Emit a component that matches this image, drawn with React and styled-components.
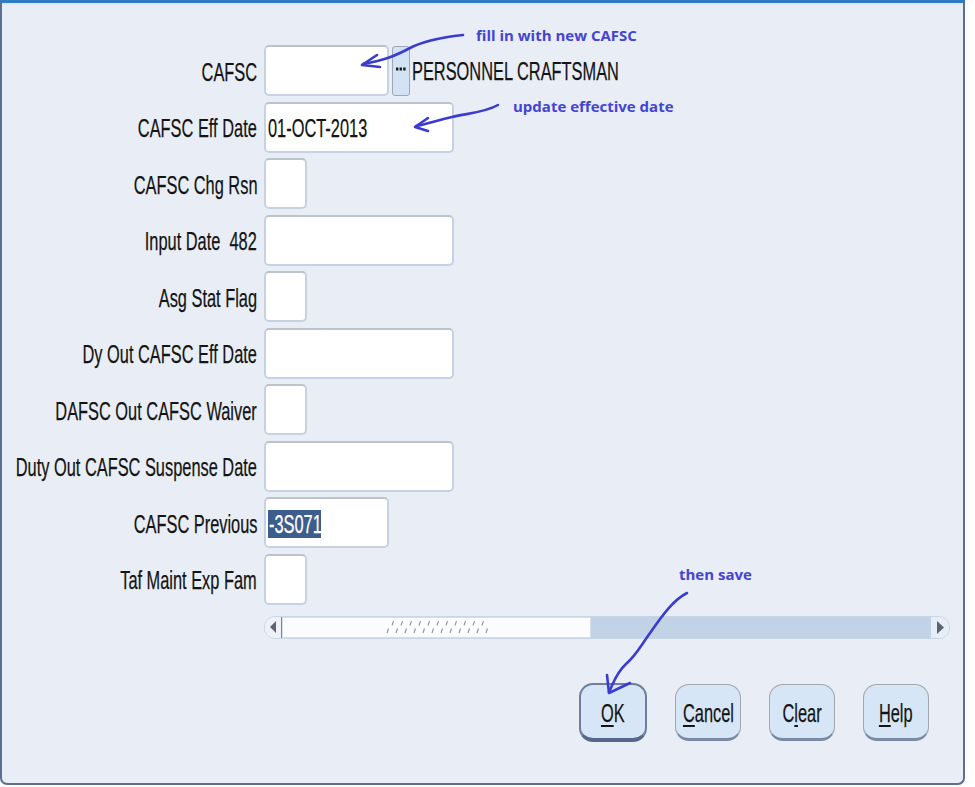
import React from 'react';
import styled, { createGlobalStyle } from 'styled-components';

const GlobalStyle = createGlobalStyle`
  html, body {
    margin: 0;
    padding: 0;
    background: #ffffff;
  }
  body {
    font-family: "Liberation Sans", Arial, sans-serif;
  }
`;

const Page = styled.div`
  position: relative;
  width: 975px;
  height: 787px;
  overflow: hidden;
`;

const Window = styled.div`
  box-sizing: border-box;
  width: 965px;
  height: 785px;
  background: #e9eef6;
  border: 2px solid #5b6e94;
  border-top: 3px solid #2f7cc5;
  border-radius: 0 0 7px 7px;
  box-shadow: inset 0 2px 0 #dfe7f1;
`;

const Form = styled.div`
  display: grid;
  grid-template-columns: 255px auto;
  column-gap: 7px;
  row-gap: 5.5px;
  padding-top: 42px;
  justify-content: start;
`;

const Label = styled.div`
  height: 51px;
  display: flex;
  align-items: center;
  justify-content: flex-end;
  padding-top: 2px;
  box-sizing: border-box;
`;

const Narrow = styled.span`
  display: inline-block;
  font-size: 26px;
  line-height: 1;
  color: #141414;
  white-space: pre;
  -webkit-text-stroke: 0.25px currentColor;
  transform: scaleX(0.63);
  transform-origin: ${p => (p.$from === 'left' ? 'left center' : p.$from === 'center' ? 'center' : 'right center')};
`;

const FieldCell = styled.div`
  display: flex;
  align-items: center;
  height: 51px;
`;

const fieldWidths = { s: 43, m: 125, l: 190 };

const Field = styled.div`
  box-sizing: border-box;
  width: ${p => fieldWidths[p.$size]}px;
  height: 51px;
  background: #ffffff;
  border: 2px solid #c6d2e2;
  border-top-color: #bcc3cd;
  border-radius: 5px;
  display: flex;
  align-items: center;
  padding-left: 2px;
  padding-top: 2px;
`;

const Selected = styled.span`
  display: inline-flex;
  align-items: center;
  width: 52px;
  height: 28px;
  padding-left: 1px;
  background: #3d5d8c;
  overflow: visible;
`;

const LovButton = styled.div`
  box-sizing: border-box;
  width: 18px;
  height: 50px;
  margin-left: 3px;
  background: #d3e2f4;
  border: 1.5px solid #9ea7b3;
  border-radius: 3px;
  display: flex;
  align-items: center;
  justify-content: center;
  padding-bottom: 4px;
`;

const Description = styled.span`
  margin-left: 2px;
`;

const Scrollbar = styled.div`
  box-sizing: border-box;
  display: flex;
  align-items: stretch;
  width: 686px;
  height: 23px;
  margin: 11px 0 0 262px;
  border: 1.5px solid #c9d5e5;
  border-radius: 11px;
  background: #eef2f8;
  overflow: hidden;
`;

const ScrollArrow = styled.div`
  width: ${p => p.$w}px;
  display: flex;
  align-items: center;
  justify-content: center;
  background: ${p => p.$bg};
  border-right: ${p => (p.$divider ? '1.5px solid #7d8592' : 'none')};
`;

const Thumb = styled.div`
  width: 307px;
  background: #fbfcfe;
  border: 1px solid #d7dfea;
  display: flex;
  align-items: center;
  justify-content: center;
`;

const Track = styled.div`
  flex: 1;
  background: #c2d3e8;
`;

const ButtonRow = styled.div`
  display: flex;
  justify-content: flex-end;
  align-items: flex-start;
  gap: 28px;
  margin-top: 44px;
  padding-right: 34px;
`;

const Button = styled.div`
  box-sizing: border-box;
  width: ${p => (p.$default ? 68 : 66)}px;
  height: ${p => (p.$default ? 59 : 57)}px;
  margin-top: ${p => (p.$default ? 0 : 1)}px;
  background: #d7e6f6;
  border: ${p => (p.$default ? '2px solid #6f7f9b' : '1.5px solid #a3a6ab')};
  border-bottom: ${p => (p.$default ? '4px solid #55688c' : '3px solid #7b8aa4')};
  border-radius: 14px;
  display: flex;
  align-items: center;
  justify-content: center;
  padding-top: 3px;
`;

const Key = styled.span`
  text-decoration: underline;
  text-underline-offset: 3px;
  text-decoration-thickness: 1.5px;
`;

const Overlay = styled.svg`
  position: absolute;
  left: 0;
  top: 0;
  pointer-events: none;
`;

const Note = styled.span`
  position: absolute;
  left: ${p => p.$x}px;
  top: ${p => p.$y}px;
  font-family: "Open Sans", "Noto Sans", sans-serif;
  font-weight: 700;
  font-size: 15px;
  line-height: 18px;
  color: #4444d2;
  white-space: nowrap;
`;

const rows = [
  { label: 'CAFSC', size: 'm', lov: true, desc: 'PERSONNEL CRAFTSMAN' },
  { label: 'CAFSC Eff Date', size: 'l', value: '01-OCT-2013' },
  { label: 'CAFSC Chg Rsn', size: 's' },
  { label: 'Input Date  482', size: 'l' },
  { label: 'Asg Stat Flag', size: 's' },
  { label: 'Dy Out CAFSC Eff Date', size: 'l' },
  { label: 'DAFSC Out CAFSC Waiver', size: 's' },
  { label: 'Duty Out CAFSC Suspense Date', size: 'l' },
  { label: 'CAFSC Previous', size: 'm', selected: '-3S071' },
  { label: 'Taf Maint Exp Fam', size: 's' },
];

const Dots = () => (
  <svg width="10" height="4" viewBox="0 0 10 4">
    <rect x="0" y="0.5" width="2.4" height="3" fill="#1a1a1a" />
    <rect x="3.6" y="0.5" width="2.4" height="3" fill="#1a1a1a" />
    <rect x="7.2" y="0.5" width="2.4" height="3" fill="#1a1a1a" />
  </svg>
);

const Grip = () => (
  <svg width="104" height="14" viewBox="0 0 104 14">
    {Array.from({ length: 11 }).map((_, i) => (
      <line key={`a${i}`} x1={7 + i * 9} y1="5.5" x2={8.5 + i * 9} y2="1" stroke="#8b93a0" strokeWidth="1.1" />
    ))}
    {Array.from({ length: 12 }).map((_, i) => (
      <line key={`b${i}`} x1={2 + i * 9} y1="13" x2={3.5 + i * 9} y2="8.5" stroke="#8b93a0" strokeWidth="1.1" />
    ))}
  </svg>
);

const LeftTri = () => (
  <svg width="6" height="12" viewBox="0 0 6 12">
    <path d="M6 0 L0 6 L6 12 Z" fill="#5d6470" />
  </svg>
);

const RightTri = () => (
  <svg width="7" height="13" viewBox="0 0 7 13">
    <path d="M0 0 L7 6.5 L0 13 Z" fill="#5d6470" />
  </svg>
);

export default function App() {
  return (
    <Page>
      <GlobalStyle />
      <Window>
        <Form>
          {rows.map(r => (
            <React.Fragment key={r.label}>
              <Label>
                <Narrow>{r.label}</Narrow>
              </Label>
              <FieldCell>
                <Field $size={r.size}>
                  {r.value && <Narrow $from="left">{r.value}</Narrow>}
                  {r.selected && (
                    <Selected>
                      <Narrow $from="left" style={{ color: '#ffffff' }}>{r.selected}</Narrow>
                    </Selected>
                  )}
                </Field>
                {r.lov && (
                  <LovButton>
                    <Dots />
                  </LovButton>
                )}
                {r.desc && (
                  <Description>
                    <Narrow $from="left">{r.desc}</Narrow>
                  </Description>
                )}
              </FieldCell>
            </React.Fragment>
          ))}
        </Form>
        <Scrollbar>
          <ScrollArrow $w={16} $bg="#eef2f8" $divider>
            <LeftTri />
          </ScrollArrow>
          <Thumb>
            <Grip />
          </Thumb>
          <Track />
          <ScrollArrow $w={18} $bg="#e7eef7">
            <RightTri />
          </ScrollArrow>
        </Scrollbar>
        <ButtonRow>
          <Button $default>
            <Narrow $from="center"><Key>O</Key>K</Narrow>
          </Button>
          <Button>
            <Narrow $from="center"><Key>C</Key>ancel</Narrow>
          </Button>
          <Button>
            <Narrow $from="center">C<Key>l</Key>ear</Narrow>
          </Button>
          <Button>
            <Narrow $from="center"><Key>H</Key>elp</Narrow>
          </Button>
        </ButtonRow>
      </Window>

      <Overlay width="975" height="787" viewBox="0 0 975 787">
        <g fill="none" stroke="#3b3bcf" strokeWidth="2.6" strokeLinecap="round" strokeLinejoin="round">
          <path d="M463 35 C 445 37, 425 40, 410 48 S 385 60, 363 64" />
          <path d="M377 55 L362 65 L380 67" />
          <path d="M498 105 C 486 112, 470 113, 452 117 S 428 124, 416 126" />
          <path d="M428 118 L415 127 L428 131" />
          <path d="M687 593 C 673 600, 662 616, 650 633 S 636 655, 626 664 S 613 684, 609 692" />
          <path d="M607 675 L609 693 L630 683" />
        </g>
      </Overlay>
      <Note $x={476} $y={26}>fill in with new CAFSC</Note>
      <Note $x={513} $y={97}>update effective date</Note>
      <Note $x={679} $y={565}>then save</Note>
    </Page>
  );
}
